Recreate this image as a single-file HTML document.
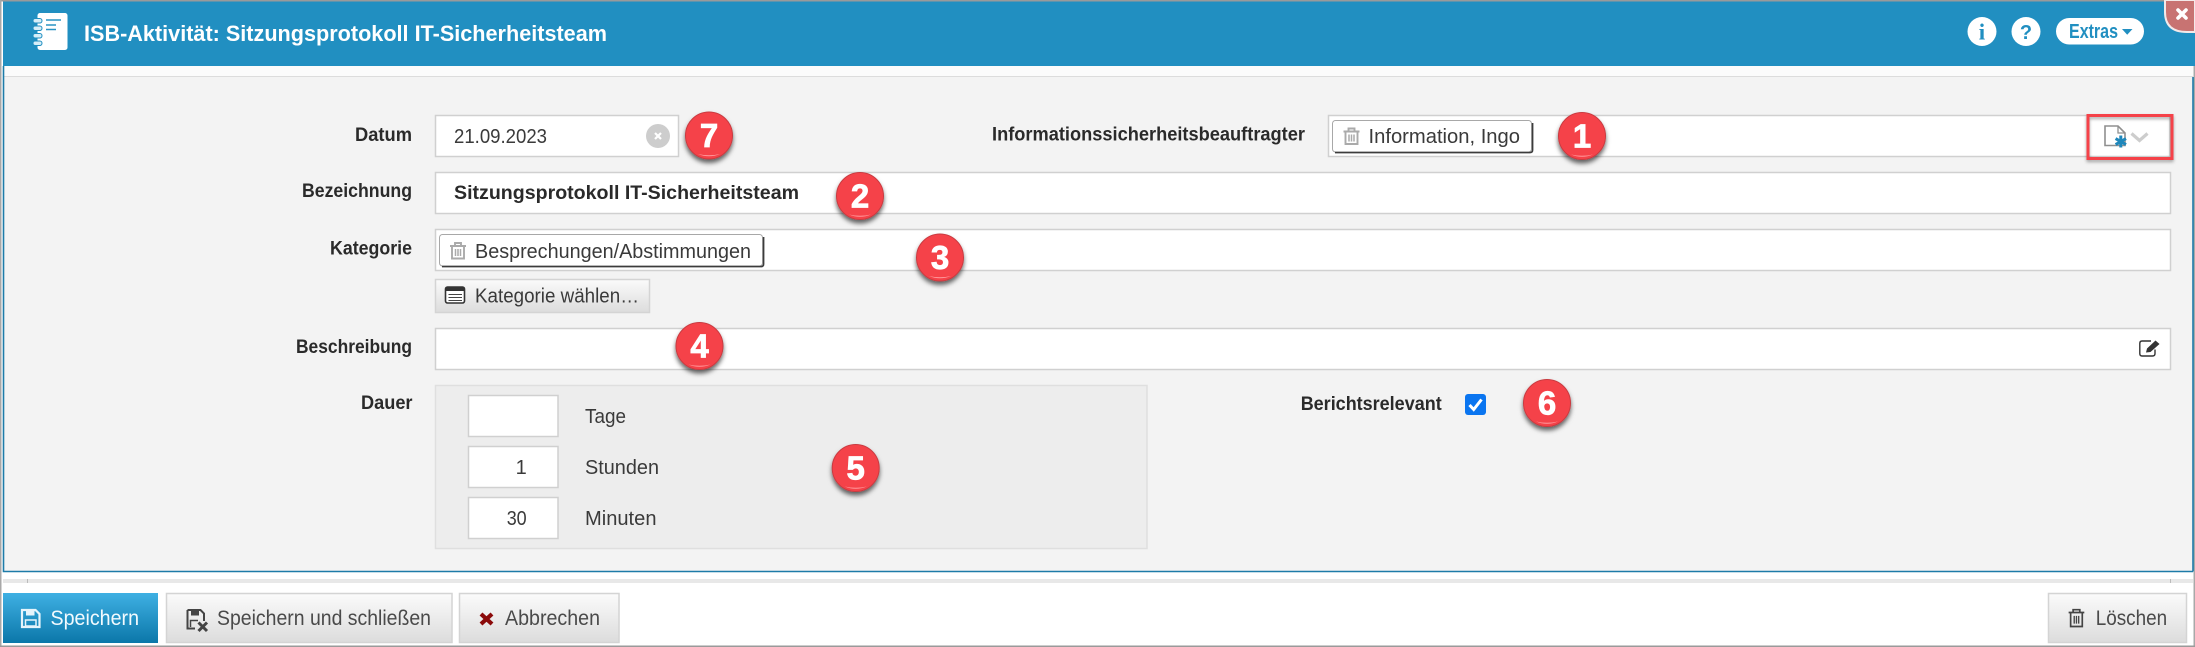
<!DOCTYPE html>
<html lang="de">
<head>
<meta charset="utf-8">
<title>ISB-Aktivität: Sitzungsprotokoll IT-Sicherheitsteam</title>
<style>
html,body{margin:0;padding:0;width:2195px;height:647px;overflow:hidden;background:#fff}
svg{display:block}
text{font-family:"Liberation Sans",sans-serif}
.l{font-size:19px;font-weight:bold;fill:#2a2a2a}
.t{font-size:20px;fill:#3a3a3a}
.b{font-size:33px;font-weight:bold;fill:#fff;stroke:#fff;stroke-width:.8px;text-anchor:middle}
.f{fill:#fff;stroke:#d0d0d0;stroke-width:1.5}
.g{fill:url(#gb);stroke:#d4d4d4;stroke-width:1.5}
.m{font-size:21px;fill:#4a4a4a}
</style>
</head>
<body>
<svg width="2195" height="647" viewBox="0 0 2195 647" xmlns="http://www.w3.org/2000/svg">
<defs>
<linearGradient id="gb" x1="0" y1="0" x2="0" y2="1"><stop offset="0" stop-color="#fbfbfb"/><stop offset="1" stop-color="#dcdcdc"/></linearGradient>
<linearGradient id="gp" x1="0" y1="0" x2="0" y2="1"><stop offset="0" stop-color="#3fb0e3"/><stop offset="1" stop-color="#0b77a9"/></linearGradient>
<filter id="sd" x="-40%" y="-40%" width="180%" height="190%"><feDropShadow dx="0" dy="3.5" stdDeviation="2.5" flood-color="#000" flood-opacity=".6"/></filter>
<filter id="sr" x="-10%" y="-20%" width="120%" height="150%"><feDropShadow dx="0" dy="2" stdDeviation="1.5" flood-color="#000" flood-opacity=".35"/></filter>
<g id="badge">
<circle r="23.5" fill="#f5434a" stroke="#c93a40" stroke-width="1" filter="url(#sd)"/>
<path d="M-11 18.5Q0 23 11 18.5Q0 21 -11 18.5Z" fill="#ff9a9d"/>
</g>
<g id="trash" fill="none" stroke="#aaa" stroke-width="1.9">
<path d="M0 4.5H16M5 4.5V1.500H11V4.5M2 4.5V17H14V4.5"/>
<path d="M5.500 7.500V14.500M8 7.500V14.500M10.500 7.500V14.500" stroke-width="1.500"/>
</g>
</defs>

<!-- outer -->
<rect width="2195" height="647" fill="#fff"/>
<rect x="0" y="0" width="2195" height="1.5" fill="#9a9a9a"/>
<rect x="0" y="0" width="1.5" height="647" fill="#a8a8a8"/>
<rect x="2193.5" y="66" width="1.5" height="581" fill="#a8a8a8"/>
<rect x="0" y="645.5" width="2195" height="1.5" fill="#9a9a9a"/>

<!-- header -->
<rect x="3" y="1.5" width="2192" height="64.5" fill="#218fc1"/>
<rect x="3" y="66" width="2190" height="10" fill="#fbfbfb"/>
<rect x="3" y="76" width="2190" height="1.5" fill="#dcdcdc"/>

<!-- notebook icon -->
<rect x="37.5" y="13" width="30" height="37" rx="2.5" fill="#fff"/>
<g fill="#d7eef8" stroke="#218fc1" stroke-width="1">
<rect x="33" y="18.5" width="9" height="4.5" rx="2.2"/><rect x="33" y="26" width="9" height="4.5" rx="2.2"/><rect x="33" y="33.5" width="9" height="4.5" rx="2.2"/><rect x="33" y="41" width="9" height="4.5" rx="2.2"/>
</g>
<path d="M46 20H61M46 25H56M46 29.5H56" stroke="#2a93c4" stroke-width="1.6"/>
<text x="84" y="41" font-size="22.500" font-weight="bold" fill="#fff" textLength="523" lengthAdjust="spacingAndGlyphs">ISB-Aktivität: Sitzungsprotokoll IT-Sicherheitsteam</text>

<!-- header buttons -->
<circle cx="1982" cy="31.5" r="14.5" fill="#fff"/>
<text x="1982" y="39.500" font-size="23" font-weight="bold" fill="#218fc1" text-anchor="middle" style="font-family:'Liberation Serif',serif">i</text>
<circle cx="2026" cy="31.5" r="14.5" fill="#fff"/>
<text x="2026" y="39" font-size="20" font-weight="bold" fill="#218fc1" text-anchor="middle">?</text>
<rect x="2056" y="18" width="88" height="26.5" rx="13.2" fill="#fff"/>
<text x="2069" y="38" font-size="20" font-weight="bold" fill="#218fc1" textLength="49" lengthAdjust="spacingAndGlyphs">Extras</text>
<path d="M2122 29H2132.5L2127.2 34.8Z" fill="#218fc1"/>

<!-- close -->
<path d="M2165 0V12Q2165 32 2187 32H2195V0Z" fill="#c87372" stroke="#f3e9e9" stroke-width="2"/>
<path d="M2178 10L2186 18M2186 10L2178 18" stroke="#fff" stroke-width="3.6" stroke-linecap="round"/>

<!-- body -->
<rect x="3" y="77" width="2190" height="494.5" fill="#f3f3f3"/>
<path d="M3.5 66V571.5H2193" fill="none" stroke="#1d7ba8" stroke-width="1.6"/>
<path d="M2193 77V571.5" fill="none" stroke="#1d7ba8" stroke-width="1.6"/>
<rect x="3" y="579" width="2190" height="4" fill="#e8e8e8"/>
<rect x="27" y="579" width="1" height="4" fill="#bbb"/>
<rect x="2170" y="579" width="1" height="4" fill="#bbb"/>

<!-- Datum -->
<text class="l" x="355" y="141" textLength="57" lengthAdjust="spacingAndGlyphs">Datum</text>
<rect class="f" x="435.5" y="115.5" width="243" height="41"/>
<text class="t" x="454" y="143" textLength="93" lengthAdjust="spacingAndGlyphs">21.09.2023</text>
<circle cx="658" cy="136" r="12" fill="#cdcdcd"/>
<path d="M655 133L661 139M661 133L655 139" stroke="#fff" stroke-width="2.2"/>
<use href="#badge" x="709" y="135.5"/>
<text class="b" x="709" y="147">7</text>

<!-- ISB -->
<text class="l" x="992" y="140.500" textLength="313" lengthAdjust="spacingAndGlyphs">Informationssicherheitsbeauftragter</text>
<rect class="f" x="1328.5" y="115.5" width="841.5" height="41"/>
<rect x="1332.5" y="120.5" width="199" height="31.5" rx="3" fill="#fff" stroke="#a8a8a8" stroke-width="1"/>
<path d="M1335 152.6H1530Q1532.6 152.6 1532.6 150V123" fill="none" stroke="#3c3c3c" stroke-width="1.6"/>
<use href="#trash" x="1343.5" y="127"/>
<text class="t" x="1368.5" y="143" textLength="151.5" lengthAdjust="spacingAndGlyphs">Information, Ingo</text>
<use href="#badge" x="1582" y="136"/>
<text class="b" x="1582" y="147.500">1</text>

<!-- red highlight -->
<rect x="2088" y="115.5" width="84" height="43" fill="none" stroke="#f5434a" stroke-width="3" filter="url(#sr)"/>
<path d="M2105 126H2118L2125 133V145.5H2105Z" fill="#fff" stroke="#8f8f8f" stroke-width="1.6"/>
<path d="M2118 126V133H2125" fill="none" stroke="#8f8f8f" stroke-width="1.3"/>
<path d="M2120.8 135.5V147.5M2115.6 138.6L2126 144.6M2126 138.6L2115.6 144.6" stroke="#1f87bb" stroke-width="3"/>
<path d="M2131.5 133.5L2139.5 140.5L2147.5 133.5" fill="none" stroke="#cdcdcd" stroke-width="3.2"/>

<!-- Bezeichnung -->
<text class="l" x="302" y="197" textLength="110" lengthAdjust="spacingAndGlyphs">Bezeichnung</text>
<rect class="f" x="435.5" y="172.5" width="1735" height="41"/>
<text x="454" y="199" font-size="19.500" font-weight="bold" fill="#2a2a2a" textLength="345" lengthAdjust="spacingAndGlyphs">Sitzungsprotokoll IT-Sicherheitsteam</text>
<use href="#badge" x="860" y="196"/>
<text class="b" x="860" y="207.500">2</text>

<!-- Kategorie -->
<text class="l" x="330" y="254.500" textLength="82" lengthAdjust="spacingAndGlyphs">Kategorie</text>
<rect class="f" x="435.5" y="229.5" width="1735" height="41"/>
<rect x="439.5" y="234.5" width="323" height="31.5" rx="3" fill="#fff" stroke="#a8a8a8" stroke-width="1"/>
<path d="M442 266.6H761Q763.6 266.6 763.6 264V237" fill="none" stroke="#3c3c3c" stroke-width="1.6"/>
<use href="#trash" x="450" y="241.5"/>
<text class="t" x="475" y="258" textLength="276" lengthAdjust="spacingAndGlyphs">Besprechungen/Abstimmungen</text>
<use href="#badge" x="940" y="257.5"/>
<text class="b" x="940" y="269">3</text>
<rect class="g" x="435.5" y="279.5" width="214" height="33"/>
<rect x="445.5" y="287" width="19" height="16" rx="2" fill="#fff" stroke="#333" stroke-width="1.6"/>
<rect x="445.5" y="287" width="19" height="4" fill="#333"/>
<path d="M448.500 294.5H462M448.500 297.500H462M448.500 300.500H462" stroke="#444" stroke-width="1"/>
<text class="t" x="475" y="302.5" textLength="164" lengthAdjust="spacingAndGlyphs">Kategorie wählen…</text>

<!-- Beschreibung -->
<text class="l" x="296" y="353" textLength="116" lengthAdjust="spacingAndGlyphs">Beschreibung</text>
<rect class="f" x="435.5" y="328.5" width="1735" height="41"/>
<use href="#badge" x="699.5" y="346"/>
<text class="b" x="699.5" y="357.500">4</text>
<path d="M2155 349.5V353.5Q2155 356 2152.500 356H2142Q2139.800 356 2139.800 353.500V343.500Q2139.800 341 2142 341H2151" fill="none" stroke="#333" stroke-width="1.4"/>
<path d="M2146 352.500L2147 348.500L2155.500 340.500L2159.500 344L2150.500 352Z" fill="#333"/>

<!-- Dauer -->
<text class="l" x="361" y="409" textLength="51.500" lengthAdjust="spacingAndGlyphs">Dauer</text>
<rect x="435.500" y="385.500" width="711.500" height="163" fill="#ededed" stroke="#dfdfdf" stroke-width="1.500"/>
<rect class="f" x="468.500" y="395.500" width="89.500" height="41"/>
<rect class="f" x="468.500" y="446.500" width="89.500" height="41"/>
<rect class="f" x="468.500" y="497.500" width="89.500" height="41"/>
<text class="t" x="526.700" y="474" text-anchor="end">1</text>
<text class="t" x="526.700" y="525" text-anchor="end" textLength="20" lengthAdjust="spacingAndGlyphs">30</text>
<text class="t" x="585" y="423" textLength="41" lengthAdjust="spacingAndGlyphs">Tage</text>
<text class="t" x="585" y="474" textLength="74" lengthAdjust="spacingAndGlyphs">Stunden</text>
<text class="t" x="585" y="525" textLength="71.500" lengthAdjust="spacingAndGlyphs">Minuten</text>
<use href="#badge" x="855.700" y="468"/>
<text class="b" x="855.700" y="479.500">5</text>

<!-- Berichtsrelevant -->
<text class="l" x="1300.700" y="410" textLength="141" lengthAdjust="spacingAndGlyphs">Berichtsrelevant</text>
<rect x="1465" y="394" width="21" height="21" rx="3" fill="#0a75f0"/>
<path d="M1469.500 405L1473.700 409.500L1481.500 399.500" fill="none" stroke="#fff" stroke-width="3"/>
<use href="#badge" x="1547" y="403"/>
<text class="b" x="1547" y="414.500">6</text>

<!-- footer buttons -->
<rect x="3" y="593" width="155" height="50" fill="url(#gp)"/>
<path d="M22 610H35.500L39.500 614V627H22Z" fill="none" stroke="#e6f4fb" stroke-width="2.200"/>
<rect x="26" y="610" width="8.500" height="5.500" fill="#e6f4fb"/>
<rect x="25.500" y="620" width="10.500" height="6" fill="none" stroke="#e6f4fb" stroke-width="1.500"/>
<text x="50.500" y="625" font-size="21" fill="#f2fafe" textLength="88.500" lengthAdjust="spacingAndGlyphs">Speichern</text>

<rect class="g" x="166.500" y="593.500" width="285.500" height="49"/>
<path d="M187.500 610H200.500L204 613.500V621M195 628.500H187.500V610" fill="none" stroke="#444" stroke-width="2"/>
<rect x="191" y="610" width="8" height="5.500" fill="#444"/>
<path d="M190.500 627V620.500H198" fill="none" stroke="#444" stroke-width="1.500"/>
<path d="M198.500 622.500L207 631M207 622.500L198.500 631" stroke="#444" stroke-width="3"/>
<text class="m" x="217" y="625" textLength="214" lengthAdjust="spacingAndGlyphs">Speichern und schließen</text>

<rect class="g" x="459.500" y="593.500" width="159.500" height="49"/>
<path d="M481 614L492 624M492 614L481 624" stroke="#8b0a0a" stroke-width="4.200"/>
<text class="m" x="505" y="625" textLength="95" lengthAdjust="spacingAndGlyphs">Abbrechen</text>

<rect class="g" x="2048.500" y="593.500" width="138" height="49"/>
<g transform="translate(2067.500,608) scale(1.120)" fill="none" stroke="#444" stroke-width="1.500">
<path d="M1 4H15M5 4V1.500H11V4M2.800 4V16.500H13.200V4"/>
<path d="M6 7V14M8 7V14M10 7V14" stroke-width="1.200"/>
</g>
<text class="m" x="2095.700" y="625" textLength="71.500" lengthAdjust="spacingAndGlyphs">Löschen</text>
</svg>
</body>
</html>
